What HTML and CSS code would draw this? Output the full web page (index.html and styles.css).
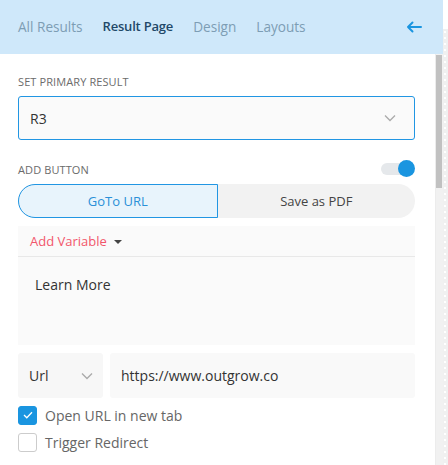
FILE: index.html
```html
<!DOCTYPE html>
<html lang="en">
<head>
    <meta charset="UTF-8">
    <title>Result Page</title>
    <link rel="stylesheet" href="styles.css">
</head>
<body>
    <div class="frame">
        <div class="panel">
            <div class="tabs">
                <a class="tab">All Results</a>
                <a class="tab active">Result Page</a>
                <a class="tab">Design</a>
                <a class="tab">Layouts</a>
                <span class="back">
                    <svg width="16" height="12" viewBox="0 0 16 12"><path d="M15 6H2M6.5 1.5L2 6l4.5 4.5" fill="none" stroke="#1a95e0" stroke-width="2" stroke-linecap="round" stroke-linejoin="round"/></svg>
                </span>
            </div>
            <div class="body">
                <div class="content">
                    <div class="label first">Set Primary Result</div>
                    <div class="select main-select">
                        <span>R3</span>
                        <svg class="chev" width="12" height="8" viewBox="0 0 12 8"><path d="M1 1.5l5 5 5-5" fill="none" stroke="#aaa" stroke-width="1.3"/></svg>
                    </div>

                    <div class="label-row">
                        <div class="label">Add Button</div>
                        <div class="toggle"><span class="knob"></span></div>
                    </div>
                    <div class="segment">
                        <div class="seg active">GoTo URL</div>
                        <div class="seg">Save as PDF</div>
                    </div>

                    <div class="editor">
                        <div class="toolbar">
                            <span class="add-var">Add Variable</span>
                            <span class="caret"></span>
                        </div>
                        <div class="editor-text">Learn More</div>
                    </div>

                    <div class="url-row">
                        <div class="select url-type">
                            <span>Url</span>
                            <svg class="chev" width="12" height="8" viewBox="0 0 12 8"><path d="M1 1.5l5 5 5-5" fill="none" stroke="#aaa" stroke-width="1.3"/></svg>
                        </div>
                        <div class="url-input">https://www.outgrow.co</div>
                    </div>

                    <label class="check">
                        <span class="box checked">
                            <svg width="10" height="8" viewBox="0 0 10 8"><path d="M1 4l2.8 2.8L9 1.2" fill="none" stroke="#fff" stroke-width="1.3"/></svg>
                        </span>
                        Open URL in new tab
                    </label>
                    <label class="check">
                        <span class="box"></span>
                        Trigger Redirect
                    </label>
                </div>
                <div class="scrollbar"><div class="thumb"></div></div>
            </div>
        </div>
        <div class="edge"></div>
    </div>
</body>
</html>
```

FILE: styles.css
```css
body {
    margin: 0;
    font-family: "Open Sans", "Noto Sans", Arial, sans-serif;
    background: #fff;
    color: #333;
}
.frame {
    display: flex;
    width: 448px;
    height: 465px;
    overflow: hidden;
}
.panel {
    width: 443px;
    display: flex;
    flex-direction: column;
}
.edge {
    flex: 1;
    margin-top: 29px;
    background-color: #f0f0f0;
    background-image: radial-gradient(#fff 0.6px, transparent 0.8px);
    background-size: 4px 6px;
}
.tabs {
    height: 54px;
    background: #cfe8fa;
    display: flex;
    align-items: center;
    padding: 0 18px 2px;
    gap: 20px;
    box-sizing: border-box;
}
.tab {
    font-size: 13.6px;
    color: #7d9db4;
}
.tab.active {
    font-size: 13px;
    letter-spacing: -0.2px;
    color: #1f4868;
    font-weight: 600;
}
.back {
    margin-left: auto;
    margin-right: 3px;
    display: flex;
    margin-top: 2px;
}
.body {
    flex: 1;
    display: flex;
}
.content {
    width: 398px;
    padding: 0 20px 0 18px;
}
.scrollbar {
    width: 7px;
    background: #f1f1f1;
    border-left: 1px solid #ececec;
}
.thumb {
    margin: 1px 1px 0 0;
    height: 133px;
    background: #c1c1c1;
}
.label {
    font-size: 11px;
    color: #6b6b6b;
    text-transform: uppercase;
    letter-spacing: 0.1px;
}
.label.first {
    margin-top: 20px;
    margin-bottom: 7px;
}
.select {
    display: flex;
    align-items: center;
    justify-content: space-between;
    box-sizing: border-box;
    font-size: 14px;
    color: #333;
}
.main-select {
    height: 44px;
    border: 1px solid #2196e3;
    border-radius: 3px;
    background: #fafafa;
    padding: 0 18px 0 11px;
}
.label-row {
    display: flex;
    align-items: center;
    justify-content: space-between;
    margin-top: 20px;
    height: 18px;
}
.toggle {
    position: relative;
    width: 28px;
    height: 12px;
    border-radius: 6px;
    background: #e5e8eb;
    margin-right: 6px;
}
.knob {
    position: absolute;
    right: -6px;
    top: -3px;
    width: 17px;
    height: 17px;
    border-radius: 50%;
    background: #1a95e0;
}
.segment {
    display: flex;
    margin-top: 6px;
    height: 34px;
    background: #f2f2f2;
    border-radius: 17px;
}
.seg {
    flex: 1;
    display: flex;
    align-items: center;
    justify-content: center;
    font-size: 13px;
    color: #444;
}
.seg.active {
    background: #e8f4fc;
    border: 1px solid #2196e3;
    border-radius: 17px 0 0 17px;
    color: #2a90d8;
}
.editor {
    margin-top: 8px;
    background: #fafafa;
    height: 119px;
}
.toolbar {
    height: 30px;
    border-bottom: 1px solid #e8e8e8;
    display: flex;
    align-items: center;
    padding-left: 12px;
}
.add-var {
    font-size: 13px;
    color: #f2566b;
}
.caret {
    margin-left: 7px;
    margin-top: 1px;
    border-left: 4px solid transparent;
    border-right: 4px solid transparent;
    border-top: 4px solid #444;
}
.editor-text {
    padding: 18px 17px;
    font-size: 14px;
    color: #333;
}
.url-row {
    display: flex;
    gap: 7px;
    margin-top: 8px;
    height: 45px;
}
.url-type {
    width: 85px;
    background: #f7f7f7;
    border-radius: 3px;
    padding: 0 10px 0 11px;
}
.url-input {
    flex: 1;
    display: flex;
    align-items: center;
    background: #f9f9f9;
    border-radius: 3px;
    padding-left: 11px;
    font-size: 14px;
    color: #333;
}
.check {
    display: flex;
    align-items: center;
    gap: 8px;
    font-size: 14px;
    color: #666;
    height: 20px;
    margin-top: 7px;
}
.box {
    width: 19px;
    height: 19px;
    box-sizing: border-box;
    border: 1px solid #ccc;
    border-radius: 3px;
    background: #fff;
    display: flex;
    align-items: center;
    justify-content: center;
}
.box.checked {
    background: #1a95e0;
    border-color: #1a95e0;
}
```
